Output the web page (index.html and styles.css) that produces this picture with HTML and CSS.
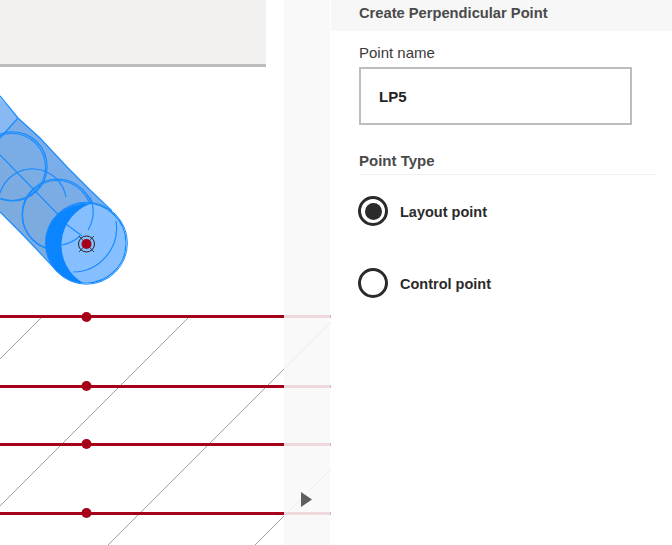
FILE: index.html
```html
<!DOCTYPE html>
<html lang="en">
<head>
<meta charset="utf-8">
<title>Create Perpendicular Point</title>
<link rel="stylesheet" href="styles.css">
</head>
<body>
<div class="app">
  <section class="stage">
    <svg class="drawing" viewBox="0 0 331 545" width="331" height="545" aria-hidden="true">
      <defs>
        <linearGradient id="tubeShade" gradientUnits="userSpaceOnUse" x1="105" y1="120" x2="30" y2="205">
          <stop offset="0" stop-color="#8aa8ca"/>
          <stop offset="0.55" stop-color="#7aaeea"/>
          <stop offset="1" stop-color="#7cabe0"/>
        </linearGradient>
      </defs>
      <g class="hatch">
        <path d="M0 359L42 317"/>
        <path d="M0 506L189 317"/>
        <path d="M108 545L331 322"/>
        <path d="M255 545L331 469"/>
      </g>
      <g class="tube">
        <path class="tube-body" d="M0 98L18 118L40 138L67 167L90 190L115 215L57 270L25 237L0 212Z"/>
        <path class="tube-lit" d="M0 98L18 118L0 138Z"/>
        <path class="tube-line" d="M0 96L18 118L40 138L67 167L90 190L112 211"/>
        <path class="tube-line" d="M0 212L25 237L57 271"/>
        <path class="tube-line" d="M18 118L0 138"/>
        <path class="tube-line" d="M0 155L80 237"/>
        <circle class="tube-ring" cx="12" cy="167" r="33.5"/>
        <circle class="tube-ring" cx="12.6" cy="166.4" r="34.5"/>
        <path class="tube-line" d="M0 193A34 34 0 0 1 66 197"/>
        <circle class="tube-ring" cx="57" cy="215" r="34.5"/>
        <circle class="tube-ring" cx="57.6" cy="214.6" r="35.5"/>
        <circle class="tube-end" cx="86" cy="243" r="39.5"/>
        <path class="tube-shade" d="M90 204A40 40 0 0 0 46 243A40 40 0 0 0 83 283A44 44 0 0 1 90 204Z"/>
        <path class="tube-line" d="M73 272A44 44 0 0 0 116 221"/>
        <path class="tube-line" d="M62 245A36 36 0 0 0 80 236"/>
        <path class="tube-line" d="M66 224L82 236"/>
        <path class="tube-line" d="M90 197A35 35 0 0 1 88 230"/>
        <circle class="tube-edge" cx="86" cy="243" r="40"/>
        <circle class="tube-edge-outer" cx="86.4" cy="243.2" r="41"/>
      </g>
      <g class="target">
        <circle class="target-ring" cx="86.5" cy="244" r="8"/>
        <path class="target-cross" d="M79 236L94 252M94 236L79 252"/>
        <circle class="pin" cx="86.5" cy="244" r="5"/>
      </g>
      <g class="rails">
        <path d="M0 316.5H331"/>
        <path d="M0 386.5H331"/>
        <path d="M0 444.5H331"/>
        <path d="M0 513.5H331"/>
      </g>
      <circle class="pin" cx="86.5" cy="317" r="5"/>
      <circle class="pin" cx="86.5" cy="386" r="5"/>
      <circle class="pin" cx="86.5" cy="444" r="5"/>
      <circle class="pin" cx="86.5" cy="513" r="5"/>
    </svg>
    <div class="toolbar"></div>
    <div class="gutter">
      <svg class="gutter-arrow" viewBox="0 0 11 15" width="11" height="15" aria-hidden="true"><path d="M0 0L11 7.5L0 15Z"/></svg>
    </div>
  </section>
  <aside class="panel">
    <h1 class="panel-title">Create Perpendicular Point</h1>
    <div class="panel-body">
      <label class="field-label" for="point-name">Point name</label>
      <input class="field-input" id="point-name" type="text" value="LP5">
      <h2 class="section-title">Point Type</h2>
      <div class="option">
        <span class="radio radio-on"></span>
        <span class="option-label">Layout point</span>
      </div>
      <div class="option">
        <span class="radio"></span>
        <span class="option-label">Control point</span>
      </div>
    </div>
  </aside>
</div>
</body>
</html>
```
FILE: styles.css
```css
* { box-sizing: border-box; }
html, body { margin: 0; height: 100%; overflow: hidden; background: #fff; }
body { font-family: "Liberation Sans", Arial, sans-serif; color: #2b2b2b; }
.app { display: flex; width: 672px; height: 545px; }
.stage { position: relative; flex: 0 0 331px; height: 545px; overflow: hidden; }
.drawing { display: block; }
.toolbar { position: absolute; left: 0; top: 0; width: 266px; height: 67px; background: #f2f1ef; border-bottom: 3px solid #bdbdbd; }
.gutter { position: absolute; left: 284px; top: 0; width: 47px; height: 545px; background: rgba(248, 248, 248, 0.88) padding-box; border-right: 1px solid rgba(255, 255, 255, 0.7); }
.gutter-arrow { position: absolute; left: 17px; top: 492px; display: block; }
.gutter-arrow path { fill: #5f5f5f; }
.hatch path { stroke: #a0a0a0; stroke-width: 1; fill: none; }
.rails path { stroke: #a50018; stroke-width: 3; fill: none; }
.pin { fill: #a50018; }
.tube-body { fill: url(#tubeShade); }
.tube-lit { fill: #88b9f2; }
.tube-ring { fill: none; stroke: #1a8cff; stroke-width: 1.2; }
.tube-line { fill: none; stroke: #1a8cff; stroke-width: 1.2; }
.tube-end { fill: #86bfff; }
.tube-shade { fill: #0a84ff; }
.tube-edge { fill: none; stroke: #0a84ff; stroke-width: 1.2; }
.tube-edge-outer { fill: none; stroke: #1a8cff; stroke-width: 1; }
.target-ring { fill: none; stroke: #222; stroke-width: 1; }
.target-cross { stroke: #222; stroke-width: 0.8; fill: none; }
.panel { flex: 1 1 auto; min-width: 0; }
.panel-title { margin: 0; height: 31px; padding: 5px 0 0 28px; background: #f7f7f7; font-size: 14.7px; line-height: 16px; font-weight: 700; color: #4a4a4a; }
.panel-body { padding: 14px 16px 0 28px; }
.field-label { display: block; font-size: 15px; line-height: 16px; color: #3a3a3a; }
.field-input { display: block; width: 273px; height: 58px; margin: 6px 0 0; padding: 1px 18px 0; border: 2px solid #bdbdbd; border-radius: 0; background: #fff; font: 700 15px "Liberation Sans", Arial, sans-serif; color: #222; outline: none; }
.section-title { margin: 28px 0 0; padding-bottom: 5px; font-size: 15px; line-height: 16px; font-weight: 700; color: #4a4a4a; border-bottom: 1px solid #f2f2f2; }
.option { display: flex; align-items: center; gap: 12px; height: 30px; margin: 21px 0 0 -1px; }
.option + .option { margin-top: 42px; }
.radio { flex: 0 0 30px; width: 30px; height: 30px; border: 3px solid #2b2b2b; border-radius: 50%; background: #fff; }
.radio-on { padding: 3.5px; background: #2b2b2b content-box; }
.option-label { margin-top: 2px; font-size: 14.5px; font-weight: 700; color: #2b2b2b; }
```
